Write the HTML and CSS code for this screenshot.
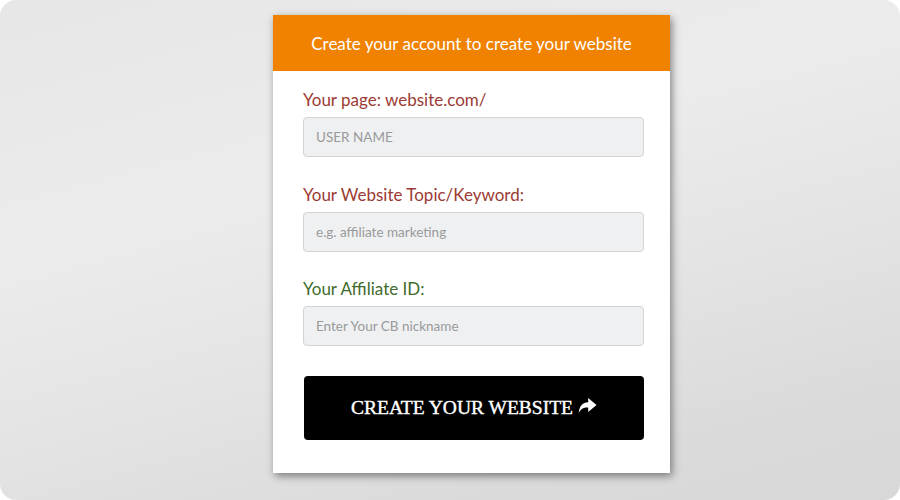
FILE: index.html
```html
<!DOCTYPE html>
<html lang="en">
<head>
    <meta charset="UTF-8">
    <meta name="viewport" content="width=device-width, initial-scale=1.0">
    <title>Create your website</title>
    <link rel="stylesheet" href="styles.css">
</head>
<body>
    <div class="frame">
        <!-- signup card -->
        <div class="card">
            <div class="card-head">Create your account to create your website</div>
            <form class="card-body" onsubmit="event.preventDefault();">
                <label class="lbl red" for="username">Your page: website.com/</label>
                <input type="text" id="username" placeholder="USER NAME">

                <label class="lbl red" for="topic">Your Website Topic/Keyword:</label>
                <input type="text" id="topic" placeholder="e.g. affiliate marketing">

                <label class="lbl green" for="cbid">Your Affiliate ID:</label>
                <input type="text" id="cbid" placeholder="Enter Your CB nickname">

                <button type="submit">CREATE YOUR WEBSITE
                    <svg class="share" viewBox="0 0 16 14" width="19" height="17"><path d="M8.6 0.6 L15.6 6.6 L8.6 12.4 V8.8 C4.8 8.6 2.4 9.8 0.6 13.4 C0.9 7.8 3.8 4.4 8.6 4.2 Z" fill="#fff"/></svg>
                </button>
            </form>
        </div>
    </div>
</body>
</html>
```

FILE: styles.css
```css
html, body {
    margin: 0;
    background: #fff;
}
.frame {
    width: 900px;
    height: 500px;
    border-radius: 16px;
    overflow: hidden;
    background: linear-gradient(165deg, #e6e6e6 0%, #ececec 35%, #e4e4e4 60%, #dadada 85%, #d8d8d8 100%);
    padding-top: 15px;
    box-sizing: border-box;
}
.card {
    width: 397px;
    margin-left: 273px;
    background: #fff;
    box-shadow: 2px 3px 8px rgba(0, 0, 0, 0.45);
    font-family: Lato, 'Open Sans', sans-serif;
}
.card-head {
    height: 56px;
    background: #f08200;
    color: #fff;
    font-size: 17px;
    display: flex;
    align-items: center;
    justify-content: center;
}
.card-body {
    display: flex;
    flex-direction: column;
    padding: 17px 26px 33px 30px;
}
.lbl {
    font-size: 17px;
    line-height: 24px;
    margin-bottom: 5px;
}
.red {
    color: #9c3b33;
}
.green {
    color: #3f6b2b;
}
input {
    height: 40px;
    box-sizing: border-box;
    background: #eff0f2;
    border: 1px solid #d3d4d6;
    border-radius: 4px;
    padding: 0 12px;
    font-family: Lato, 'Open Sans', sans-serif;
    font-size: 13.5px;
    margin-bottom: 25.5px;
}
input::placeholder {
    color: #9a9a9a;
}
button {
    margin-top: 4px;
    margin-left: 1px;
    height: 64px;
    background: #000;
    color: #fff;
    border: none;
    border-radius: 4px;
    font-family: 'Liberation Serif', serif;
    font-size: 19.5px;
    -webkit-text-stroke: 0.4px #fff;
    display: flex;
    align-items: center;
    justify-content: center;
    gap: 5px;
}
.share {
    margin-top: -4px;
}
```
